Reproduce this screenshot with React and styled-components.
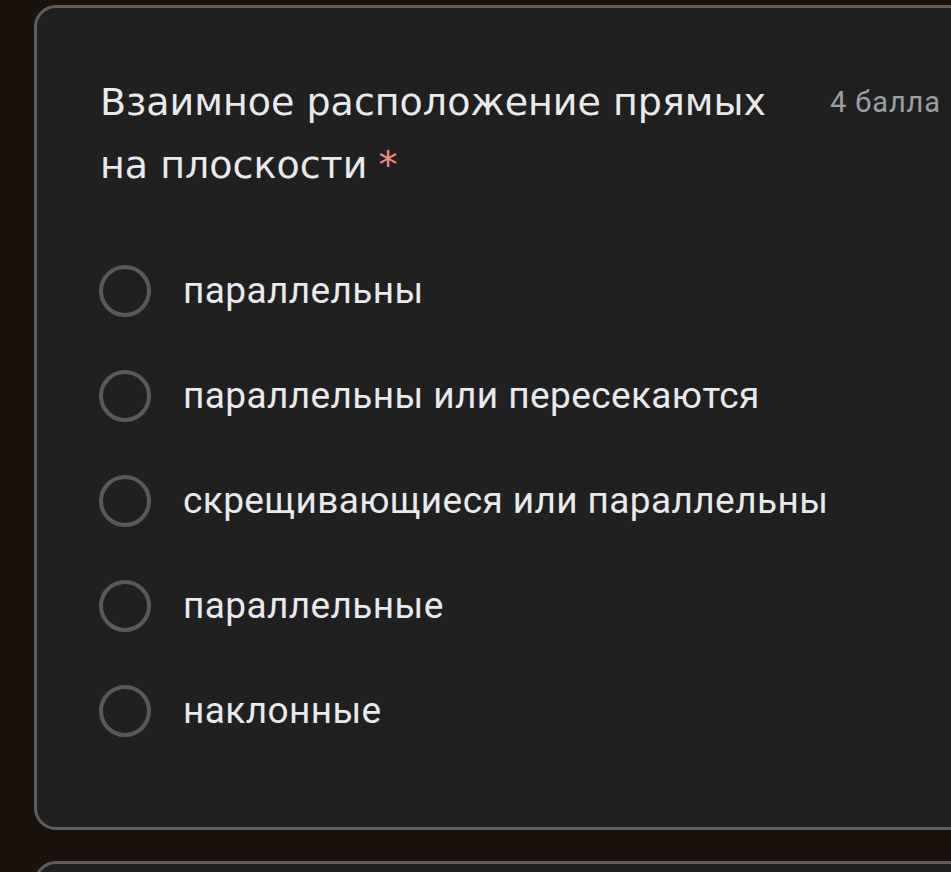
import React from "react";
import styled, { createGlobalStyle } from "styled-components";

const Global = createGlobalStyle`
  html, body { margin: 0; padding: 0; background: #1b120d; overflow: hidden; }
  body { width: 951px; height: 872px; }
`;

const Page = styled.div`
  display: flex;
  flex-direction: column;
  gap: 31px;
  padding: 5px 0 0 34px;
  width: 951px;
  height: 872px;
  box-sizing: border-box;
  overflow: hidden;
`;

const Card = styled.div`
  flex: none;
  width: 1000px;
  height: ${(p) => p.$h}px;
  box-sizing: border-box;
  background: #202020;
  border: 3px solid #5f5e5c;
  border-radius: 22px;
  padding: 0 0 0 63px;
`;

const Header = styled.div`
  display: flex;
  align-items: flex-start;
  padding-top: 63px;
`;

const Title = styled.div`
  width: 700px;
  font-family: "DejaVu Sans", sans-serif;
  font-size: 38px;
  line-height: 63px;
  color: #e8eaed;
`;

const Star = styled.span`
  display: inline-block;
  color: #f28b82;
  margin-left: 11px;
  line-height: 1;
`;

const Points = styled.div`
  margin-left: 30px;
  font-family: Roboto, sans-serif;
  font-size: 29px;
  letter-spacing: 0.9px;
  line-height: 63px;
  color: #9aa0a6;
  white-space: nowrap;
`;

const Options = styled.div`
  display: flex;
  flex-direction: column;
  margin-top: 41px;
`;

const Option = styled.label`
  display: flex;
  align-items: center;
  gap: 32px;
  height: 105px;
  margin-left: -1px;
`;

const Radio = styled.span`
  flex: none;
  width: 52px;
  height: 52px;
  box-sizing: border-box;
  border: 4px solid #595a5d;
  border-radius: 50%;
`;

const OptionText = styled.span`
  font-family: Roboto, sans-serif;
  font-size: 37px;
  color: #e8eaed;
  letter-spacing: 0.4px;
`;

const options = [
  "параллельны",
  "параллельны или пересекаются",
  "скрещивающиеся или параллельны",
  "параллельные",
  "наклонные",
];

export default function App() {
  return (
    <>
      <Global />
      <Page>
        <Card $h={825}>
          <Header>
            <Title>
              Взаимное расположение прямых на плоскости<Star>*</Star>
            </Title>
            <Points>4 балла</Points>
          </Header>
          <Options>
            {options.map((o) => (
              <Option key={o}>
                <Radio />
                <OptionText>{o}</OptionText>
              </Option>
            ))}
          </Options>
        </Card>
        <Card $h={200} />
      </Page>
    </>
  );
}
